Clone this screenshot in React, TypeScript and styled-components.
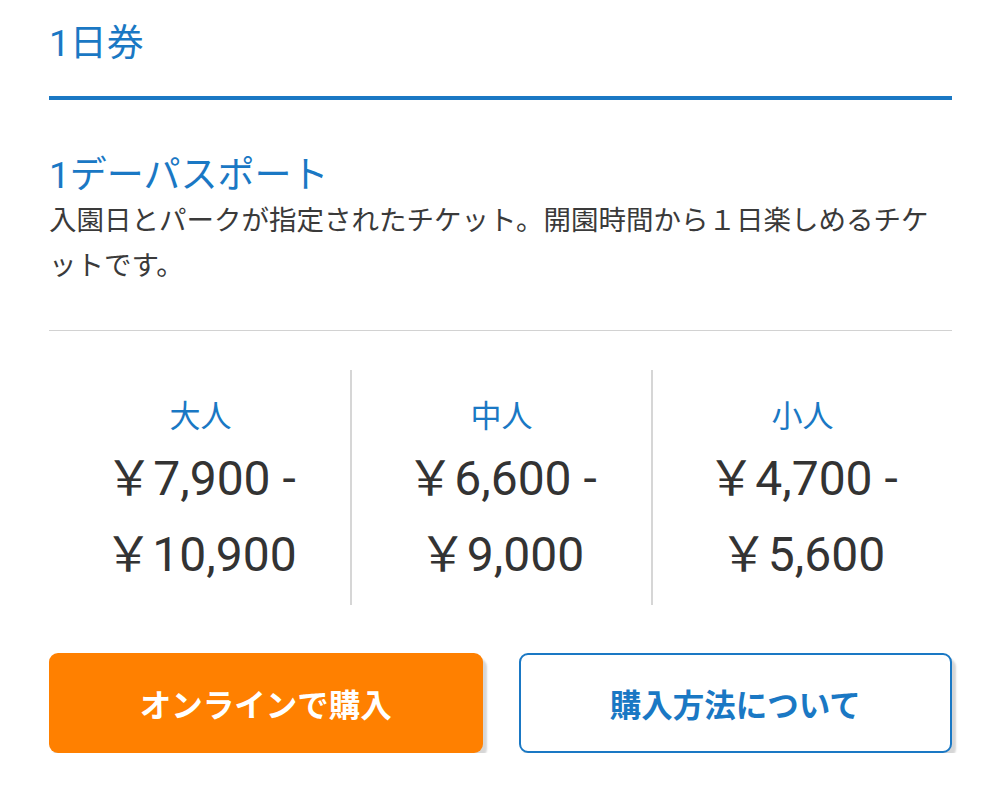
import React from "react";
import styled, { createGlobalStyle } from "styled-components";

const GlobalStyle = createGlobalStyle`
  html, body {
    margin: 0;
    padding: 0;
    background: #ffffff;
  }
  body {
    font-family: Roboto, "Noto Sans CJK JP", "Noto Sans", sans-serif;
    color: #333333;
  }
`;

const BLUE = "#1a78c4";

const Page = styled.div`
  padding: 22px 47px 0 49px;
`;

const SectionHeader = styled.div`
  padding-bottom: 30px;
  border-bottom: 4px solid ${BLUE};
`;

const SectionTitle = styled.h2`
  margin: 0;
  font-size: 37px;
  line-height: 44px;
  font-weight: 400;
  color: ${BLUE};
`;

const Ticket = styled.div`
  padding-top: 54px;
`;

const TicketName = styled.h3`
  margin: 0;
  font-size: 37px;
  line-height: 44px;
  font-weight: 400;
  color: ${BLUE};
`;

const Description = styled.p`
  margin: 0;
  font-size: 27.5px;
  line-height: 45px;
  color: #3a3a3a;
`;

const Rule = styled.hr`
  margin: 42px 0 0;
  border: 0;
  border-top: 1px solid #d2d2d2;
  height: 0;
`;

const PriceGrid = styled.div`
  display: grid;
  grid-template-columns: 1fr 1fr 1fr;
  margin-top: 39px;
`;

const PriceCol = styled.div<{ $divider?: boolean }>`
  display: flex;
  flex-direction: column;
  align-items: center;
  height: 235px;
  box-sizing: border-box;
  padding-top: 25px;
  border-left: ${(p) => (p.$divider ? "2px solid #d6d6d6" : "2px solid transparent")};
`;

const AgeLabel = styled.div`
  font-size: 31px;
  line-height: 44px;
  color: ${BLUE};
  margin-bottom: 2px;
`;

const Price = styled.div`
  font-size: 48px;
  line-height: 76px;
  color: #333333;
  white-space: nowrap;
`;

const Buttons = styled.div`
  display: grid;
  grid-template-columns: 1fr 1fr;
  gap: 36px;
  margin-top: 48px;
`;

const Button = styled.a<{ $primary?: boolean }>`
  display: flex;
  align-items: center;
  justify-content: center;
  height: 100px;
  box-sizing: border-box;
  border-radius: 9px;
  font-size: 31.5px;
  font-weight: 700;
  text-decoration: none;
  background: ${(p) => (p.$primary ? "#ff8000" : "#ffffff")};
  color: ${(p) => (p.$primary ? "#ffffff" : BLUE)};
  border: ${(p) => (p.$primary ? "none" : `2px solid ${BLUE}`)};
  box-shadow: 4px 5px 2px rgba(0, 0, 0, 0.16);
  cursor: pointer;
`;

const prices = [
  { label: "大人", from: "￥7,900 -", to: "￥10,900" },
  { label: "中人", from: "￥6,600 -", to: "￥9,000" },
  { label: "小人", from: "￥4,700 -", to: "￥5,600" },
];

export default function App() {
  return (
    <>
      <GlobalStyle />
      <Page>
        <SectionHeader>
          <SectionTitle>1日券</SectionTitle>
        </SectionHeader>
        <Ticket>
          <TicketName>1デーパスポート</TicketName>
          <Description>
            入園日とパークが指定されたチケット。開園時間から１日楽しめるチケットです。
          </Description>
          <Rule />
          <PriceGrid>
            {prices.map((p, i) => (
              <PriceCol key={p.label} $divider={i > 0}>
                <AgeLabel>{p.label}</AgeLabel>
                <Price>{p.from}</Price>
                <Price>{p.to}</Price>
              </PriceCol>
            ))}
          </PriceGrid>
          <Buttons>
            <Button $primary>オンラインで購入</Button>
            <Button>購入方法について</Button>
          </Buttons>
        </Ticket>
      </Page>
    </>
  );
}
